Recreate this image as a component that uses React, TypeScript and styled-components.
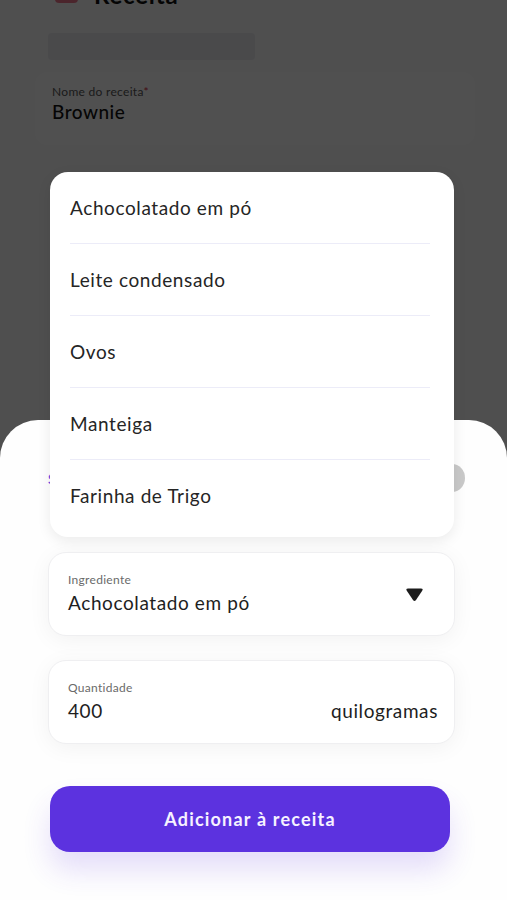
import React from "react";
import styled, { createGlobalStyle } from "styled-components";

const GlobalStyle = createGlobalStyle`
  html, body { margin: 0; padding: 0; }
  body { font-family: "Lato", "Noto Sans", sans-serif; color: #222; }
  * { box-sizing: border-box; }
`;

const Screen = styled.div`
  position: relative;
  width: 507px;
  height: 900px;
  overflow: hidden;
  background: #f4f4f5;
`;

const Behind = styled.div`
  display: flex;
  flex-direction: column;
  padding: 0 32px 0 35px;
`;

const Header = styled.div`
  display: flex;
  align-items: center;
  gap: 16px;
  margin-top: -21px;
  padding-left: 20px;
  height: 30px;
`;

const HeaderIcon = styled.div`
  width: 23px;
  height: 26px;
  margin-top: -8px;
  border-radius: 4px;
  background: #e9758a;
`;

const HeaderTitle = styled.div`
  font-size: 24px;
  font-weight: 700;
  letter-spacing: 0.8px;
  color: #111;
`;

const Skeleton = styled.div<{ $w: number }>`
  width: ${(p) => p.$w}px;
  height: 27px;
  margin: 24px 0 12px 13px;
  border-radius: 4px;
  background: #e6e6ea;
`;

const NameCard = styled.div`
  height: 73px;
  padding: 12px 17px;
  border-radius: 12px;
  background: #f8f8f8;
  display: flex;
  flex-direction: column;
  gap: 1px;
`;

const NameLabel = styled.div`
  font-size: 12px;
  letter-spacing: 0.3px;
  color: #555;
  span { color: #d01f3c; }
`;

const NameValue = styled.div`
  font-size: 19px;
  font-weight: 500;
  letter-spacing: 0.5px;
  color: #111;
`;

const Overlay = styled.div`
  position: absolute;
  inset: 0;
  background: rgba(0, 0, 0, 0.68);
`;

const Sheet = styled.div`
  position: absolute;
  left: 0;
  right: 0;
  top: 420px;
  bottom: 0;
  background: #fefefe;
  border-radius: 38px 38px 0 0;
  padding: 44px 52px 0 48px;
  display: flex;
  flex-direction: column;
`;

const TabsRow = styled.div`
  display: flex;
  align-items: center;
  justify-content: space-between;
  height: 28px;
  margin-right: -10px;
`;

const TabText = styled.div`
  font-size: 14px;
  font-weight: 700;
  color: #6a4de6;
`;

const Knob = styled.div`
  width: 26px;
  height: 28px;
  border-radius: 50%;
  background: #c9c9c9;
`;

const Field = styled.div<{ $mt: number }>`
  margin-top: ${(p) => p.$mt}px;
  height: 84px;
  border-radius: 18px;
  background: #fff;
  border: 1px solid #efeff1;
  box-shadow: 0 4px 22px rgba(0, 0, 0, 0.05);
  padding: 20px 16px 0 19px;
  display: flex;
  align-items: flex-start;
  justify-content: space-between;
`;

const FieldText = styled.div`
  display: flex;
  flex-direction: column;
`;

const FieldLabel = styled.div`
  font-size: 12px;
  line-height: 14px;
  letter-spacing: 0.3px;
  color: #6a6a6a;
`;

const FieldValue = styled.div`
  margin-top: 4px;
  font-size: 19px;
  line-height: 24px;
  letter-spacing: 0.6px;
  color: #1e1e1e;
`;

const Unit = styled.div`
  margin-top: 18px;
  font-size: 19px;
  line-height: 24px;
  letter-spacing: 0.6px;
  color: #1e1e1e;
`;

const Caret = styled.svg`
  margin: 14px 14px 0 0;
  width: 19px;
  height: 15px;
`;

const Button = styled.button`
  margin: 42px 5px 0 2px;
  height: 66px;
  border: none;
  border-radius: 20px;
  background: #5c32df;
  color: #f6f2ff;
  font-family: inherit;
  font-size: 18px;
  font-weight: 700;
  letter-spacing: 1.2px;
  box-shadow: 0 18px 28px rgba(92, 50, 223, 0.16);
`;

const Menu = styled.div`
  position: absolute;
  top: 172px;
  left: 50px;
  width: 404px;
  height: 365px;
  background: #fff;
  border-radius: 18px;
  box-shadow: 0 4px 14px rgba(0, 0, 0, 0.08);
  padding: 0 24px 0 20px;
  display: flex;
  flex-direction: column;
`;

const MenuItem = styled.div<{ $last?: boolean }>`
  height: ${(p) => (p.$last ? 77 : 72)}px;
  display: flex;
  align-items: center;
  padding-bottom: ${(p) => (p.$last ? 7 : 0)}px;
  border-bottom: ${(p) => (p.$last ? "none" : "1px solid #ececf8")};
  font-size: 19px;
  letter-spacing: 0.6px;
  color: #252525;
`;

const items = [
  "Achocolatado em pó",
  "Leite condensado",
  "Ovos",
  "Manteiga",
  "Farinha de Trigo",
];

export default function App() {
  return (
    <>
      <GlobalStyle />
      <Screen>
        <Behind>
          <Header>
            <HeaderIcon />
            <HeaderTitle>Receita</HeaderTitle>
          </Header>
          <Skeleton $w={207} />
          <NameCard>
            <NameLabel>
              Nome do receita<span>*</span>
            </NameLabel>
            <NameValue>Brownie</NameValue>
          </NameCard>
        </Behind>
        <Overlay />
        <Sheet>
          <TabsRow>
            <TabText>Substituir</TabText>
            <Knob />
          </TabsRow>
          <Field $mt={60}>
            <FieldText>
              <FieldLabel>Ingrediente</FieldLabel>
              <FieldValue>Achocolatado em pó</FieldValue>
            </FieldText>
            <Caret viewBox="0 0 19 15">
              <path
                d="M3 1.5 H16 Q18.5 1.5 17.2 3.8 L11 13 Q9.5 15 8 13 L1.8 3.8 Q0.5 1.5 3 1.5 Z"
                fill="#1c1c1c"
              />
            </Caret>
          </Field>
          <Field $mt={24}>
            <FieldText>
              <FieldLabel>Quantidade</FieldLabel>
              <FieldValue>400</FieldValue>
            </FieldText>
            <Unit>quilogramas</Unit>
          </Field>
          <Button>Adicionar à receita</Button>
        </Sheet>
        <Menu>
          {items.map((t, i) => (
            <MenuItem key={t} $last={i === items.length - 1}>
              {t}
            </MenuItem>
          ))}
        </Menu>
      </Screen>
    </>
  );
}
